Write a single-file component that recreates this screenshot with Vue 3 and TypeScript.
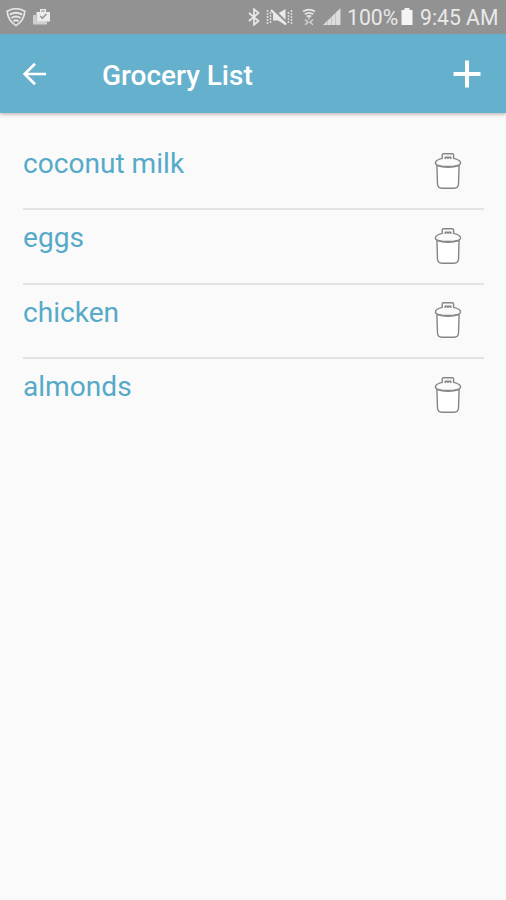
<script setup lang="ts">
import { ref } from 'vue'

interface GroceryItem {
  id: number
  name: string
}

const items = ref<GroceryItem[]>([
  { id: 1, name: 'coconut milk' },
  { id: 2, name: 'eggs' },
  { id: 3, name: 'chicken' },
  { id: 4, name: 'almonds' },
])

function removeItem(id: number) {
  items.value = items.value.filter((item) => item.id !== id)
}
</script>

<template>
  <div class="screen">
    <div class="status">
      <svg class="wifi-shield" width="20" height="20" viewBox="0 0 20 20" fill="none">
        <path d="M1.2 4.2Q10-.8 18.8 4.2Q18.2 13.5 10 18.6Q1.8 13.5 1.2 4.2Z" stroke-width="1.7" />
        <path d="M3.8 7.6Q10 3.8 16.2 7.6M5.4 11Q10 7.8 14.6 11M7.4 14.2Q10 12.4 12.6 14.2" stroke-width="2" />
      </svg>
      <svg class="bag" width="19" height="18" viewBox="0 0 19 18">
        <path d="M1 7H4V13.2H15V16.5H1Z" fill="#cfcfcf" />
        <path d="M4.5 4H8V1H14V4H18V13.5H4.5Z" fill="#ececec" />
        <path d="M9.4 3.8V2.2H12.6V3.8Z" fill="#a5a5a5" />
        <path d="M8.2 8L10.4 10.2L14.5 6" fill="none" stroke="#929292" stroke-width="1.5" />
      </svg>
      <span class="spacer"></span>
      <svg class="bluetooth" width="12" height="18" viewBox="0 0 12 18" fill="none">
        <path d="M1 5L10.5 13L6 16.8V1.2L10.5 5L1 13" stroke-width="1.8" />
      </svg>
      <svg class="mute" width="27" height="18" viewBox="0 0 27 18">
        <path d="M7 5.5H12L19.5 1V17L12 12.5H7Z" fill="#e9e9e9" />
        <path d="M7.5 1.5L20.5 14.5" fill="none" stroke="#929292" stroke-width="2.4" />
        <path d="M5 2L20 16.5" fill="none" stroke="#e9e9e9" stroke-width="2.4" />
        <path d="M1.5 2V16M4.5 4V15M22.5 4V15M25.5 2V16" fill="none" stroke="#d8d8d8" stroke-width="1.6" stroke-dasharray="2 1" />
      </svg>
      <svg class="wifi" width="14" height="18" viewBox="0 0 14 18" fill="none">
        <path d="M1 3.4Q7-.2 13 3.4M2.8 6.2Q7 3.4 11.2 6.2M4.7 8.6Q7 7 9.3 8.6" stroke-width="1.8" />
        <path d="M7 9V11.5M3 11.5L6 14.3L3 16.8M11 11.5L8 14.3L11 16.8" stroke-width="1.4" opacity=".8" />
      </svg>
      <svg class="signal" width="18" height="18" viewBox="0 0 18 18">
        <path d="M0 17L17.5 0V17Z" fill="#dcdcdc" />
        <path d="M4.5 13V17M8.5 9V17M12.5 5V17" stroke="#bcbcbc" stroke-width=".8" />
      </svg>
      <span class="percent">100%</span>
      <svg class="battery" width="12" height="18" viewBox="0 0 12 18">
        <path d="M3.5 0H8.5V2H11.5V17H.5V2H3.5Z" fill="#f4f4f4" />
      </svg>
      <span class="clock">9:45 AM</span>
    </div>

    <header class="toolbar">
      <button class="back" aria-label="Back">
        <svg width="24" height="24" viewBox="0 0 24 24" fill="none">
          <path d="M23 12H2M12 1.7L1.7 12L12 22.3" stroke="#fff" stroke-width="2.7" />
        </svg>
      </button>
      <h1 class="title">Grocery List</h1>
      <button class="add" aria-label="Add item">
        <svg width="28" height="28" viewBox="0 0 28 28">
          <path d="M14 .5V27.5M.5 14H27.5" stroke="#fff" stroke-width="4" />
        </svg>
      </button>
    </header>

    <ul class="list">
      <li v-for="item in items" :key="item.id" class="row">
        <span class="name">{{ item.name }}</span>
        <button class="trash" aria-label="Delete" @click="removeItem(item.id)">
          <svg width="28" height="38" viewBox="0 0 28 38" fill="none" stroke="#868686" stroke-width="1.4" stroke-linejoin="round">
            <path d="M8.2 6.4V3.2Q8.2 1.8 9.6 1.8H18.2Q19.6 1.8 19.6 3.2V6.4Q26.6 8 26.6 10.9Q26.6 14.4 14 14.4Q1.4 14.4 1.4 10.9Q1.4 8 8.2 6.4Z" />
            <path d="M11.3 7V5.3H16.7V7M14 5.3V7" stroke-width="1.6" />
            <path fill="#fff" d="M2.9 13.5L3.5 32Q3.7 36.2 8 36.2H20Q24.3 36.2 24.5 32L25.1 13.5Q20 15.2 14 15.2Q8 15.2 2.9 13.5Z" />
          </svg>
        </button>
      </li>
    </ul>
  </div>
</template>

<style>
body {
  margin: 0;
  background: #fafafa;
}
</style>

<style scoped>
.screen {
  width: 506px;
  height: 900px;
  overflow: hidden;
  background: #fafafa;
  font-family: Roboto, sans-serif;
}
.status {
  position: relative;
  z-index: 1;
  display: flex;
  align-items: center;
  box-sizing: border-box;
  height: 34px;
  padding: 0 8px 0 6px;
  background: #929292;
  color: #e9e9e9;
  font-size: 21.2px;
  line-height: 36px;
  white-space: nowrap;
}
.status svg {
  flex: none;
}
.wifi-shield,
.bluetooth,
.wifi {
  stroke: #e6e6e6;
}
.bag {
  margin-left: 6px;
}
.spacer {
  flex: 1;
}
.mute {
  margin-left: 6px;
}
.wifi {
  margin-left: 9px;
}
.signal {
  margin-left: 7px;
}
.percent {
  width: 51px;
  margin-left: 6px;
}
.battery {
  margin-left: 3px;
}
.clock {
  width: 78px;
  margin-left: 7px;
}
.percent,
.clock {
  padding-top: 1px;
}
.toolbar {
  display: flex;
  align-items: center;
  box-sizing: border-box;
  height: 79px;
  padding: 1px 25px 0 23px;
  background: #65b0cc;
  box-shadow: 0 1px 4px rgba(70, 40, 40, 0.4);
}
button {
  display: block;
  padding: 0;
  border: 0;
  background: none;
}
button svg {
  display: block;
}
.title {
  flex: 1;
  margin: 3px 0 0 55px;
  color: #fff;
  font-size: 28px;
  font-weight: 500;
  line-height: 32px;
  letter-spacing: -0.02px;
}
.list {
  margin: 0;
  padding: 22.5px 22px 0 23px;
  list-style: none;
}
.row {
  display: flex;
  align-items: flex-start;
  justify-content: space-between;
  box-sizing: border-box;
  height: 74.5px;
  padding: 12px 22px 0 0;
  border-bottom: 2px solid #e3e3e3;
}
.row:last-child {
  border-bottom: 0;
}
.name {
  color: #56aac8;
  font-size: 28.1px;
  line-height: 32px;
}
.trash {
  margin-top: 4.5px;
}
</style>
